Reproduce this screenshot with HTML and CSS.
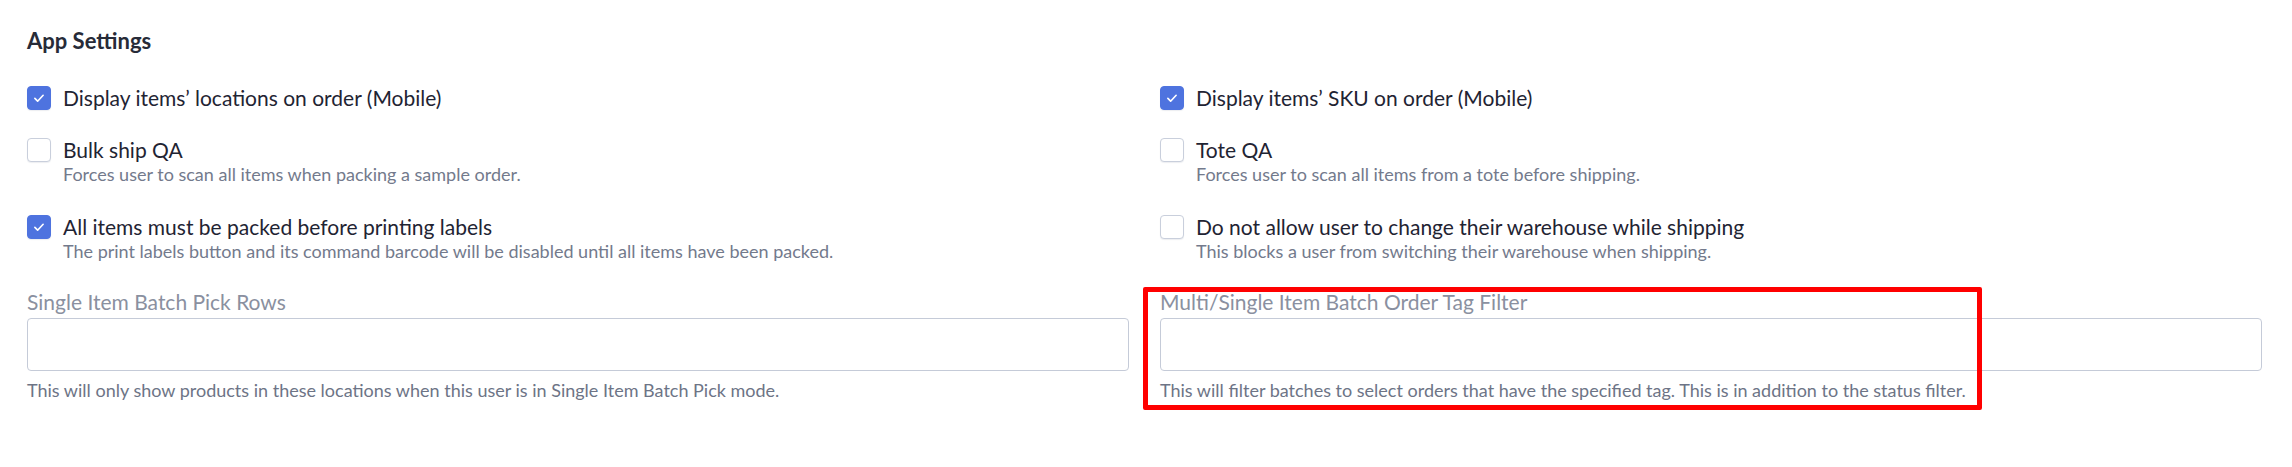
FILE: index.html
```html
<!DOCTYPE html>
<html lang="en">
<head>
<meta charset="utf-8">
<title>App Settings</title>
<link rel="stylesheet" href="styles.css">
</head>
<body>
<section class="settings">
  <h2 class="title">App Settings</h2>
  <div class="grid">
    <div class="col">
      <div class="option">
        <span class="box checked"><svg viewBox="0 0 24 24"><path d="M7.5 12.5l3 3 6-6.5"/></svg></span>
        <div class="text"><div class="label">Display items’ locations on order (Mobile)</div></div>
      </div>
      <div class="option">
        <span class="box"></span>
        <div class="text"><div class="label">Bulk ship QA</div><div class="desc">Forces user to scan all items when packing a sample order.</div></div>
      </div>
      <div class="option">
        <span class="box checked"><svg viewBox="0 0 24 24"><path d="M7.5 12.5l3 3 6-6.5"/></svg></span>
        <div class="text"><div class="label">All items must be packed before printing labels</div><div class="desc">The print labels button and its command barcode will be disabled until all items have been packed.</div></div>
      </div>
      <div class="field">
        <label class="field-label">Single Item Batch Pick Rows</label>
        <input class="input" type="text">
        <div class="help">This will only show products in these locations when this user is in Single Item Batch Pick mode.</div>
      </div>
    </div>
    <div class="col">
      <div class="option">
        <span class="box checked"><svg viewBox="0 0 24 24"><path d="M7.5 12.5l3 3 6-6.5"/></svg></span>
        <div class="text"><div class="label">Display items’ SKU on order (Mobile)</div></div>
      </div>
      <div class="option">
        <span class="box"></span>
        <div class="text"><div class="label">Tote QA</div><div class="desc">Forces user to scan all items from a tote before shipping.</div></div>
      </div>
      <div class="option">
        <span class="box"></span>
        <div class="text"><div class="label">Do not allow user to change their warehouse while shipping</div><div class="desc">This blocks a user from switching their warehouse when shipping.</div></div>
      </div>
      <div class="field highlighted">
        <label class="field-label">Multi/Single Item Batch Order Tag Filter</label>
        <input class="input" type="text">
        <div class="help">This will filter batches to select orders that have the specified tag. This is in addition to the status filter.</div>
        <span class="annotation"></span>
      </div>
    </div>
  </div>
</section>
</body>
</html>
```
FILE: styles.css
```css
* { box-sizing: border-box; }
html, body { margin: 0; padding: 0; background: #ffffff; }
body { min-height: 100vh; font-family: Lato, "Liberation Sans", Arial, sans-serif; color: #1f2433; }
.settings { padding: 28px 30px 40px 27px; }
.title { margin: 0 0 32px 0; font-size: 22px; font-weight: 700; color: #272b38; line-height: 26px; }
.grid { display: grid; grid-template-columns: 1fr 1fr; column-gap: 31px; }
.col { display: flex; flex-direction: column; }
.option { display: flex; align-items: flex-start; gap: 12px; margin-bottom: 28px; }
.box { flex: 0 0 24px; width: 24px; height: 24px; border: 1px solid #c9cfdc; border-radius: 4px; background: #fff; display: flex; align-items: center; justify-content: center; box-shadow: 0 1px 1px rgba(30,40,80,0.08); }
.box.checked { background: #4e73df; border-color: #4e73df; }
.box svg { width: 24px; height: 24px; fill: none; stroke: #fff; stroke-width: 1.8; stroke-linecap: round; stroke-linejoin: round; }
.text { display: flex; flex-direction: column; }
.label { font-size: 21px; line-height: 24px; color: #1f2433; }
.desc { font-size: 18px; line-height: 25px; color: #737a8c; }
.field { position: relative; display: flex; flex-direction: column; margin-top: -2px; }
.field-label { font-size: 21px; line-height: 24px; color: #8a90a0; }
.input { margin-top: 4px; height: 53px; border: 1px solid #c5cbd8; border-radius: 4px; background: #fff; font: inherit; outline: none; }
.help { margin-top: 7px; font-size: 18px; line-height: 24px; color: #6d7486; }
.annotation { position: absolute; left: -17px; top: -3px; width: 839px; height: 123px; border: 5px solid #ff0000; border-radius: 2px; pointer-events: none; }
```
